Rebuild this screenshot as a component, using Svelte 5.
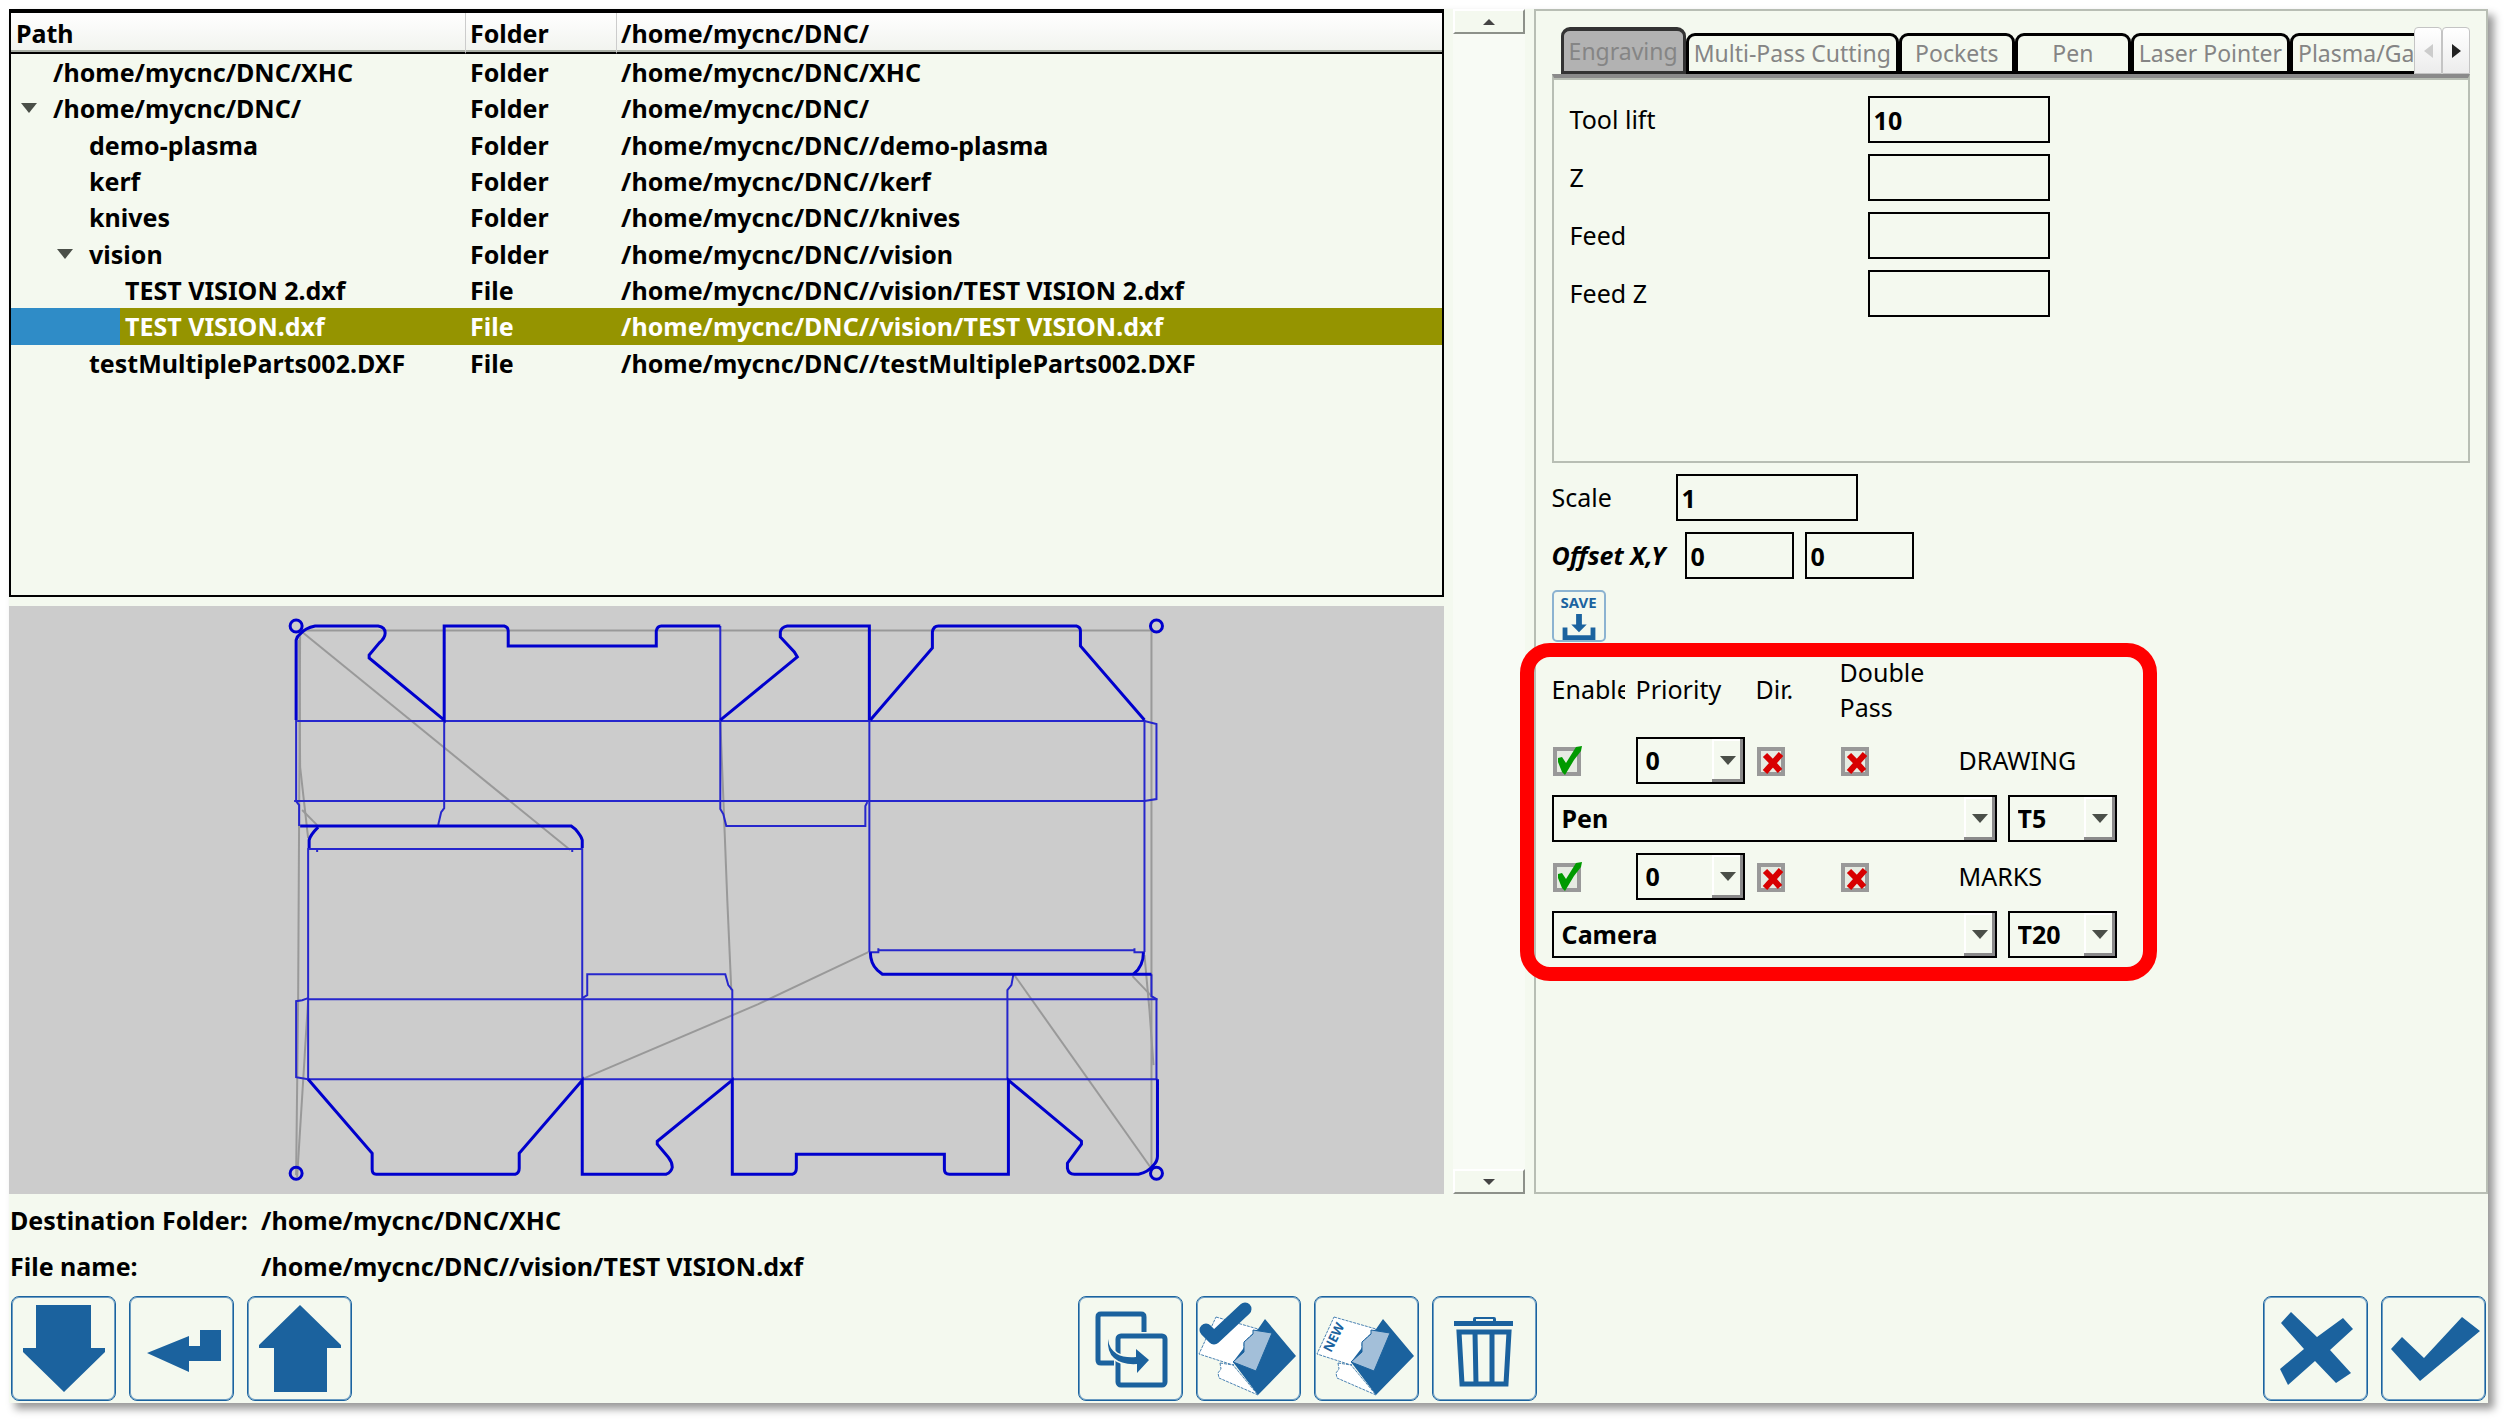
<script lang="ts">
	type Entry = { name: string; type: 'Folder' | 'File'; path: string; level: number; open?: boolean };

	const entries: Entry[] = [
		{ name: '/home/mycnc/DNC/XHC', type: 'Folder', path: '/home/mycnc/DNC/XHC', level: 0 },
		{ name: '/home/mycnc/DNC/', type: 'Folder', path: '/home/mycnc/DNC/', level: 0, open: true },
		{ name: 'demo-plasma', type: 'Folder', path: '/home/mycnc/DNC//demo-plasma', level: 1 },
		{ name: 'kerf', type: 'Folder', path: '/home/mycnc/DNC//kerf', level: 1 },
		{ name: 'knives', type: 'Folder', path: '/home/mycnc/DNC//knives', level: 1 },
		{ name: 'vision', type: 'Folder', path: '/home/mycnc/DNC//vision', level: 1, open: true },
		{ name: 'TEST VISION 2.dxf', type: 'File', path: '/home/mycnc/DNC//vision/TEST VISION 2.dxf', level: 2 },
		{ name: 'TEST VISION.dxf', type: 'File', path: '/home/mycnc/DNC//vision/TEST VISION.dxf', level: 2 },
		{ name: 'testMultipleParts002.DXF', type: 'File', path: '/home/mycnc/DNC//testMultipleParts002.DXF', level: 1 }
	];

	const tabs = ['Engraving', 'Multi-Pass Cutting', 'Pockets', 'Pen', 'Laser Pointer', 'Plasma/Gas'];

	let selected = $state(7);
	let activeTab = $state(0);

	let params = $state([
		{ id: 'tool-lift', label: 'Tool lift', value: '10' },
		{ id: 'z', label: 'Z', value: '' },
		{ id: 'feed', label: 'Feed', value: '' },
		{ id: 'feed-z', label: 'Feed Z', value: '' }
	]);

	let scale = $state('1');
	let offsetX = $state('0');
	let offsetY = $state('0');

	let layers = $state([
		{ name: 'DRAWING', enable: true, priority: '0', dir: false, double: false, op: 'Pen', tool: 'T5' },
		{ name: 'MARKS', enable: true, priority: '0', dir: false, double: false, op: 'Camera', tool: 'T20' }
	]);

	const marks = [
		[296, 626],
		[1156, 626],
		[296, 1173],
		[1156, 1173]
	];
</script>

{#snippet check(layer: any, key: string, label: string)}
	<span class="check">
		<input type="checkbox" aria-label="{label} {layer.name}" bind:checked={layer[key]} />
		<svg viewBox="0 0 30 30" aria-hidden="true">
			{#if layer[key]}
				<path d="M6 12l4-1 4 6L24 1l6-1-1 5-7 9-6 10-3 5-3-3-4-10z" fill="#009a00" />
			{:else}
				<path d="M9 9L16 16L24 25M25 8L17 17L9 26" fill="none" stroke="#d80000" stroke-width="6" stroke-linejoin="round" />
			{/if}
		</svg>
	</span>
{/snippet}

<div class="app">
	<main>
		<div class="left">
			<div class="tree">
				<table>
					<colgroup><col class="c-name" /><col class="c-type" /><col /></colgroup>
					<thead>
						<tr><th>Path</th><th>Folder</th><th>/home/mycnc/DNC/</th></tr>
					</thead>
					<tbody>
						{#each entries as entry, i}
							<tr class:selected={i === selected} onclick={() => (selected = i)}>
								<td class="name">
									<div class="node">
										<span class="indent" style:width="{36 * (entry.level + 1) + 1}px">
											{#if entry.open}<i class="arrow"></i>{/if}
										</span>
										<span class="text">{entry.name}</span>
									</div>
								</td>
								<td>{entry.type}</td>
								<td>{entry.path}</td>
							</tr>
						{/each}
					</tbody>
				</table>
			</div>

			<svg class="preview" viewBox="9 606 1434 588" role="img" aria-label="Tool path preview">
				<g class="rapid">
					<path d="M302 630.5H1151V1173" />
					<path d="M302 632L570 850" />
					<path d="M300 632L298 1000 296 1175" />
					<path d="M299 640L300 767 308 838" />
					<path d="M302 810L317 825" />
					<path d="M308 1000L297 1177" />
					<path d="M720 720L727 900 731 990" />
					<path d="M582 1079L758 1004 868 952" />
					<path d="M1014 975L1150 1167" />
					<path d="M1132 976L1153 998" />
					<path d="M1144 955L1149 1010 1153 1065" />
				</g>
				<g class="fold">
					<path d="M297 721H1144L1156 724V799L1144 801" />
					<path d="M294 801H1144" />
					<path d="M296 720V801L299 805V826" />
					<path d="M444 720V808L441 812 438 825" />
					<path d="M720 626V809L723 814 726 826H865V806L867 802" />
					<path d="M308 848V1079H1157" />
					<path d="M582 848V1079" />
					<path d="M869 720V952" />
					<path d="M1144 720V952" />
					<path d="M308 999H1157" />
					<path d="M308 998L302 1000 296 1001V1077L302 1078 308 1079" />
					<path d="M582 998L587 995V974H725L728 985 732 990V1079" />
					<path d="M1013 974L1011 985 1007 990V1079" />
					<path d="M1151 974V996L1156 999V1079" />
					<path d="M308 849H582M317 849V852M572 849V852" />
					<path d="M869 952H878V948M878 950H1135M1134 948V952H1144" />
				</g>
				<g class="cut">
					<path d="M296 720V640Q297 636 300 634Q305 628 315 626H378Q385 627 385 633Q385 638 379 643L369 655V658L444 720V626H504Q508 627 508 631V646H656V631Q657 626 661 626H720" />
					<path d="M720 720L797 657L794 652L780 637V632Q781 627 787 626H869V720" />
					<path d="M870 720L932 648V632Q933 626 938 626H1076Q1080 627 1080 631V646L1144 720" />
					<path d="M300 826H571L575 829Q581 836 582 840V848" />
					<path d="M318 827Q310 835 309 840V848" />
					<path d="M308 1079L372 1153V1169Q372 1174 376 1174H515Q519 1173 519 1168V1153L582 1080V1174H666Q671 1172 672 1167Q672 1162 668 1157L657 1144V1141L732 1080V1174H792Q796 1173 796 1168V1154H944V1169Q944 1174 949 1174H1008V1080L1081 1141V1144L1067 1163V1168Q1068 1174 1074 1174H1138Q1148 1172 1153 1165Q1157 1161 1157 1156V1079" />
					<path d="M870 952Q870 963 877 970L882 974H1151" />
					<path d="M1143 952Q1143 966 1133 974" />
					{#each marks as [x, y]}
						<ellipse cx={x} cy={y} rx="6" ry="6" />
					{/each}
				</g>
			</svg>
		</div>

		<div class="scroll">
			<button type="button" aria-label="Scroll up"><i class="up"></i></button>
			<button type="button" aria-label="Scroll down"><i class="down"></i></button>
		</div>

		<section class="panel">
			<div class="tool-tabs">
				<div class="tab-bar">
					<div class="tabs" role="tablist">
						{#each tabs as tab, i}
							<button type="button" role="tab" class:active={i === activeTab} aria-selected={i === activeTab} onclick={() => (activeTab = i)}>{tab}</button>
						{/each}
					</div>
					<button type="button" class="tab-nav" aria-label="Previous tabs" disabled><i class="prev"></i></button>
					<button type="button" class="tab-nav" aria-label="Next tabs"><i class="next"></i></button>
				</div>
				<div class="tab-page">
					{#each params as param}
						<div class="param">
							<label for={param.id}>{param.label}</label>
							<input id={param.id} type="text" bind:value={param.value} />
						</div>
					{/each}
				</div>
			</div>

			<div class="field">
				<label for="scale">Scale</label>
				<input id="scale" type="text" bind:value={scale} />
			</div>
			<div class="field offset">
				<label for="offset-x">Offset X,Y</label>
				<input id="offset-x" type="text" bind:value={offsetX} />
				<input type="text" aria-label="Offset Y" bind:value={offsetY} />
			</div>

			<button type="button" class="save">
				<span>SAVE</span>
				<svg viewBox="0 0 36 28" aria-hidden="true">
					<path d="M15 1h6v11h5l-8 8-8-8h5z" />
					<path d="M1 15h5v8h24v-8h5v13H1z" />
				</svg>
			</button>

			<div class="layers">
				<div class="layer-row head">
					<span>Enable</span><span>Priority</span><span>Dir.</span><span>Double Pass</span>
				</div>
				{#each layers as layer}
					<div class="layer-row">
						{@render check(layer, 'enable', 'Enable')}
						<span class="combo">
							<select aria-label="Priority {layer.name}" bind:value={layer.priority}>
								<option>0</option><option>1</option><option>2</option>
							</select>
						</span>
						{@render check(layer, 'dir', 'Direction')}
						{@render check(layer, 'double', 'Double pass')}
						<span>{layer.name}</span>
					</div>
					<div class="layer-op">
						<span class="combo">
							<select aria-label="Operation {layer.name}" bind:value={layer.op}>
								<option>Pen</option><option>Camera</option>
							</select>
						</span>
						<span class="combo tool">
							<select aria-label="Tool {layer.name}" bind:value={layer.tool}>
								<option>T5</option><option>T20</option>
							</select>
						</span>
					</div>
				{/each}
			</div>
		</section>
	</main>

	<dl>
		<dt>Destination Folder:</dt>
		<dd>/home/mycnc/DNC/XHC</dd>
		<dt>File name:</dt>
		<dd>{entries[selected].path}</dd>
	</dl>

	<footer>
		<div class="group">
			<button type="button" aria-label="Down">
				<svg viewBox="0 0 105 105"><path d="M25 9H80V52H94V56L53 96L12 56V52H25Z" /></svg>
			</button>
			<button type="button" aria-label="Enter">
				<svg viewBox="0 0 105 105"><path d="M18 57L60 40V50H71V34H92V65H60V76Z" /></svg>
			</button>
			<button type="button" aria-label="Up">
				<svg viewBox="0 0 105 105"><path d="M53 9L94 49V52H80V96H27V52H12V49Z" /></svg>
			</button>
		</div>
		<div class="group">
			<button type="button" aria-label="Copy">
				<svg viewBox="0 0 105 105">
					<path class="line" d="M66 36V21Q66 18 63 18H23Q20 18 20 21V64Q20 67 23 67H36" />
					<rect class="line" x="40" y="40" width="47" height="49" rx="3" />
					<path class="halo" d="M30 43Q31 53 39 58Q46 62 58 61V53L71 64L59 77V68Q44 69 36 62Q29 56 30 43Z" />
				</svg>
			</button>
			<button type="button" aria-label="Select file">
				<svg viewBox="0 0 105 105">
					<path class="paper" d="M20 21L62 33L48 46V55L37 69L3 58Z" />
					<path class="paper" d="M24 67L37 69L62 99L23 82L22 77L25 73Z" />
					<path d="M69 23L100 60L62 99L37 66L60 36Z" />
					<path class="flap" d="M57 34L76 37L60 75L37 66L48 56V46L57 38Z" />
					<path class="tick" d="M10 34L18 42L49 13" />
				</svg>
			</button>
			<button type="button" aria-label="New file">
				<svg viewBox="0 0 105 105">
					<path class="paper" d="M20 21L62 33L48 46V55L37 69L3 58Z" />
					<path class="paper" d="M24 67L37 69L62 99L23 82L22 77L25 73Z" />
					<path d="M69 23L100 60L62 99L37 66L60 36Z" />
					<path class="flap" d="M57 34L76 37L60 75L37 66L48 56V46L57 38Z" />
					<text transform="translate(17 57) rotate(-63)">NEW</text>
				</svg>
			</button>
			<button type="button" aria-label="Delete">
				<svg viewBox="0 0 105 105">
					<path d="M22 25H41V23Q41 21 43 21H62Q64 21 64 23V25H81V30H22Z" />
					<path d="M44 23H61V25H44Z" fill="#f4f9ef" />
					<path class="bin" d="M27 36H77L74 88H30ZM43 36L44 88M60 36V88" />
				</svg>
			</button>
		</div>
		<div class="group">
			<button type="button" aria-label="Cancel">
				<svg viewBox="0 0 105 105"><path d="M28 16L54 41L80 22L90 33L67 54L88 77L73 87L52 65L25 89L17 73L41 53L18 27Z" /></svg>
			</button>
			<button type="button" aria-label="OK">
				<svg viewBox="0 0 105 105"><path d="M21 41L43 62L81 21L99 35L39 85L10 53Z" /></svg>
			</button>
		</div>
	</footer>
</div>

<style>
	:global(body) { background: #fff; }

	.app {
		margin: 9px 16px 16px 9px;
		background: #f4f9ef;
		box-shadow: 6px 6px 8px #999;
		font: 25px/35px "Noto Sans", sans-serif;
		color: #000;
	}
	.app, .app * { box-sizing: border-box; }
	button, input, select { font: inherit; color: inherit; margin: 0; }
	button { cursor: pointer; padding: 0; }

	main {
		display: grid;
		grid-template-columns: 1434fr 72px 954fr;
		gap: 9px;
	}
	.left { display: flex; flex-direction: column; gap: 9px; min-width: 0; }

	/* File tree */
	.tree {
		height: 588px;
		overflow: hidden;
		border: 2px solid #000;
		border-top-width: 4px;
	}
	table {
		width: 100%;
		height: 368px;
		table-layout: fixed;
		border-collapse: separate;
		border-spacing: 0;
		font-weight: 700;
		text-align: left;
	}
	.c-name { width: 455px; }
	.c-type { width: 151px; }
	th {
		height: 41px;
		padding: 0 4px;
		background: linear-gradient(#fff, #f1f3ee);
		border-right: 1px solid #ccc;
		border-bottom: 2px solid #000;
		box-shadow: inset 0 -2px #a9afa5;
		line-height: 30px;
	}
	th:first-child { padding-left: 5px; }
	th:last-child { border-right: none; }
	td { padding: 0 4px; line-height: 30px; white-space: nowrap; }
	td.name { padding: 0; height: 1px; }
	.node { display: flex; align-items: stretch; height: 100%; }
	.node .text { flex: 1; padding-left: 5px; display: flex; align-items: center; }
	.indent { display: flex; justify-content: flex-end; align-items: center; padding-right: 11px; }
	.arrow {
		border: 8px solid transparent;
		border-top: 10px solid #4a4f48;
		border-bottom: 0;
	}
	.selected { color: #fff; }
	.selected .text, .selected td:not(.name) { background: #959400; }
	.selected .indent { background: #2f8cc7; }

	.preview { display: block; width: 100%; background: #ccc; }
	.preview g { fill: none; }
	.rapid { stroke: #999; stroke-width: 2; }
	.fold { stroke: #2626cc; stroke-width: 2; }
	.cut { stroke: #0000cd; stroke-width: 3; }

	.scroll {
		display: flex;
		flex-direction: column;
		justify-content: space-between;
		background: #f8fbf5;
	}
	.scroll button {
		display: grid;
		place-items: center;
		height: 25px;
		background: #f4f9ef;
		border: 2px solid #8d918a;
		border-top-color: #fff;
		border-left-color: #fff;
	}
	.up { border: 6px solid transparent; border-bottom-color: #444; border-top: 0; }
	.down { border: 6px solid transparent; border-top-color: #444; border-bottom: 0; }

	/* Settings panel */
	.panel {
		display: flex;
		flex-direction: column;
		gap: 11px;
		padding: 16px;
		border: 2px solid #b8beb4;
		min-width: 0;
	}
	.tab-bar { display: flex; height: 47px; padding-left: 9px; }
	.tabs { flex: 1; display: flex; align-items: flex-end; overflow: hidden; }
	.tabs button {
		flex: none;
		height: 41px;
		min-width: 116px;
		padding: 0 5px;
		border: 3px solid #000;
		border-radius: 9px 9px 0 0;
		background: #f4f9ef;
		color: #858585;
		font-size: 23px;
	}
	.tabs .active {
		height: 47px;
		background: #b2b2b2;
		border-color: #333;
		border-top-width: 4px;
	}
	.tab-nav {
		display: grid;
		place-items: center;
		width: 28px;
		border: 1px solid #c4c4c4;
		border-radius: 4px 4px 0 0;
		background: linear-gradient(#fff, #ececec);
	}
	.prev { border: 7px solid transparent; border-right: 9px solid #ccc; border-left: 0; }
	.next { border: 7px solid transparent; border-left: 9px solid #222; border-right: 0; }
	.tab-page {
		display: flex;
		flex-direction: column;
		gap: 11px;
		height: 389px;
		padding: 18px 16px;
		border: 2px solid #b8beb4;
		border-top: 4px solid #8a8a8a;
		box-shadow: inset 0 2px #b8beb4;
	}
	.param, .field { display: flex; align-items: center; }
	.param label { width: 298px; }
	input[type='text'] {
		width: 182px;
		height: 47px;
		padding: 0 4px;
		border: 2px solid #000;
		background: #f4f9ef;
		font-weight: 700;
	}
	.field label { width: 124px; }
	.offset { gap: 11px; }
	.offset label { width: 122px; font-weight: 700; font-style: italic; white-space: nowrap; }
	.offset input[type='text'] { width: 109px; }

	.save {
		align-self: flex-start;
		display: flex;
		flex-direction: column;
		align-items: center;
		gap: 4px;
		width: 54px;
		height: 52px;
		padding-top: 3px;
		border: 2px solid #8cb3d1;
		border-radius: 5px;
		background: #f4f9ef;
		color: #1b639f;
		font-size: 15px;
		font-weight: 700;
		line-height: 14px;
	}
	.save svg { width: 36px; height: 27px; fill: #1b639f; }

	/* Layer list, with the highlight frame drawn around it */
	.layers {
		position: relative;
		display: flex;
		flex-direction: column;
		gap: 11px;
		width: 565px;
	}
	.layers::after {
		content: '';
		position: absolute;
		inset: -10px -40px -23px -32px;
		border: 14px solid #f00;
		border-radius: 30px;
		pointer-events: none;
	}
	.layer-row {
		display: grid;
		grid-template-columns: 73px 109px 73px 108px 1fr;
		column-gap: 11px;
		align-items: center;
		height: 47px;
	}
	.head { height: 73px; }
	.head span { overflow: hidden; }
	.layer-op { display: flex; gap: 11px; }
	.combo { position: relative; flex: 1; height: 47px; }
	.tool { flex: 0 0 109px; }
	select {
		appearance: none;
		width: 100%;
		height: 47px;
		padding: 0 8px;
		border: 2px solid #000;
		border-radius: 0;
		background: #f4f9ef;
		font-weight: 700;
	}
	.combo::before {
		content: '';
		position: absolute;
		inset: 2px 2px 2px auto;
		width: 28px;
		border: solid #8a8a8a;
		border-width: 0 3px 3px 0;
		box-shadow: inset 2px 2px #fff;
		pointer-events: none;
	}
	.combo::after {
		content: '';
		position: absolute;
		top: 19px;
		right: 9px;
		border: 8px solid transparent;
		border-top: 9px solid #4a4f48;
		border-bottom: 0;
		pointer-events: none;
	}
	.check { position: relative; display: block; width: 30px; height: 30px; }
	.check input {
		appearance: none;
		display: block;
		width: 28px;
		height: 29px;
		margin: 1px;
		border: 4px solid #999;
		background: #e6ebe2;
	}
	.check svg { position: absolute; inset: 0; pointer-events: none; }

	dl {
		display: grid;
		grid-template-columns: 251px 1fr;
		row-gap: 11px;
		margin: 0;
		padding: 9px 1px 12px;
		font-weight: 700;
	}
	dd { margin: 0; }

	footer { display: flex; justify-content: space-between; padding: 0 2px 2px; }
	.group { display: flex; gap: 13px; }
	.group button {
		width: 105px;
		height: 105px;
		border: 1px solid #1b639f;
		border-radius: 8px;
		background: #f4f9ef;
		box-shadow: inset 0 0 0 1px #6c9cc2;
	}
	.group svg { display: block; width: 105px; height: 105px; margin: -1px; fill: #1b629e; }
	.group .line { fill: none; stroke: #1b629e; stroke-width: 5; }
	.group .bin { fill: none; stroke: #1b629e; stroke-width: 5; }
	.group .halo { stroke: #f4f9ef; stroke-width: 3; paint-order: stroke; }
	.group .paper { fill: #fff; stroke: #4a82b2; stroke-width: 1; stroke-dasharray: 3 1; }
	.group .flap { fill: #a3bfd9; stroke: #1b629e; stroke-width: 1; }
	.group .tick { fill: none; stroke: #1b629e; stroke-width: 13; stroke-linecap: round; stroke-linejoin: round; }
	.group text { font-size: 13px; font-weight: 700; }
</style>
